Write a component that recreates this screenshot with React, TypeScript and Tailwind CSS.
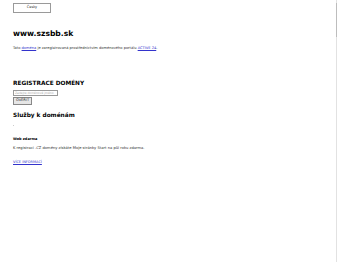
export default function App() {
  return (
    <div className="relative h-[262px] w-[350px] overflow-hidden bg-white font-['DejaVu_Sans',sans-serif] text-black">
      <div className="px-[13px] pt-[3px]">
        <div className="flex h-[10px] w-[38px] items-center justify-center border border-[#9a9a9a] bg-white text-[3.5px] text-[#333]">
          Česky
        </div>

        <h1 className="mt-[16px] text-[7.6px] font-bold leading-[10px]">www.szsbb.sk</h1>

        <p className="mt-[7px] text-[3.6px] leading-[5px] text-[#333]">
          Tato <span className="text-[#3333cc] underline">doména</span> je zaregistrovaná prostřednictvím doménového
          portálu <span className="text-[#3333cc] underline">ACTIVE 24</span>.
        </p>

        <h2 className="mt-[28px] text-[5.8px] font-bold leading-[8px]">REGISTRACE DOMÉNY</h2>

        <div className="mt-[3px] flex h-[6px] w-[45px] items-center border border-[#9a9a9a] px-[1px] text-[3px] text-[#aaa]">
          Zadejte doménové jméno
        </div>
        <div className="mt-[1px] flex h-[8px] w-[19px] items-center justify-center border border-[#888] bg-[#e6e6e6] text-[3.6px] text-[#333]">
          OVĚŘIT
        </div>

        <h2 className="mt-[6px] text-[5.8px] font-bold leading-[9px]">Služby k doménám</h2>

        <div className="mt-[5px] h-[1px] w-[1px] bg-[#ccc]" />

        <p className="mt-[11px] text-[3.5px] font-bold leading-[5px]">Web zdarma</p>
        <p className="mt-[4px] text-[3.7px] leading-[5px] text-[#333]">
          K registraci .CZ domény získáte Moje stránky Start na půl roku zdarma.
        </p>
        <p className="mt-[9px] text-[3.5px] leading-[5px] text-[#3333cc] underline">VÍCE INFORMACÍ</p>
      </div>

      <div className="absolute right-[13px] top-0 h-full w-[1px] bg-[#e2e2e2]" />
      <div className="absolute right-[13px] top-[3px] h-[34px] w-[1px] bg-[#bdbdbd]" />
    </div>
  );
}
